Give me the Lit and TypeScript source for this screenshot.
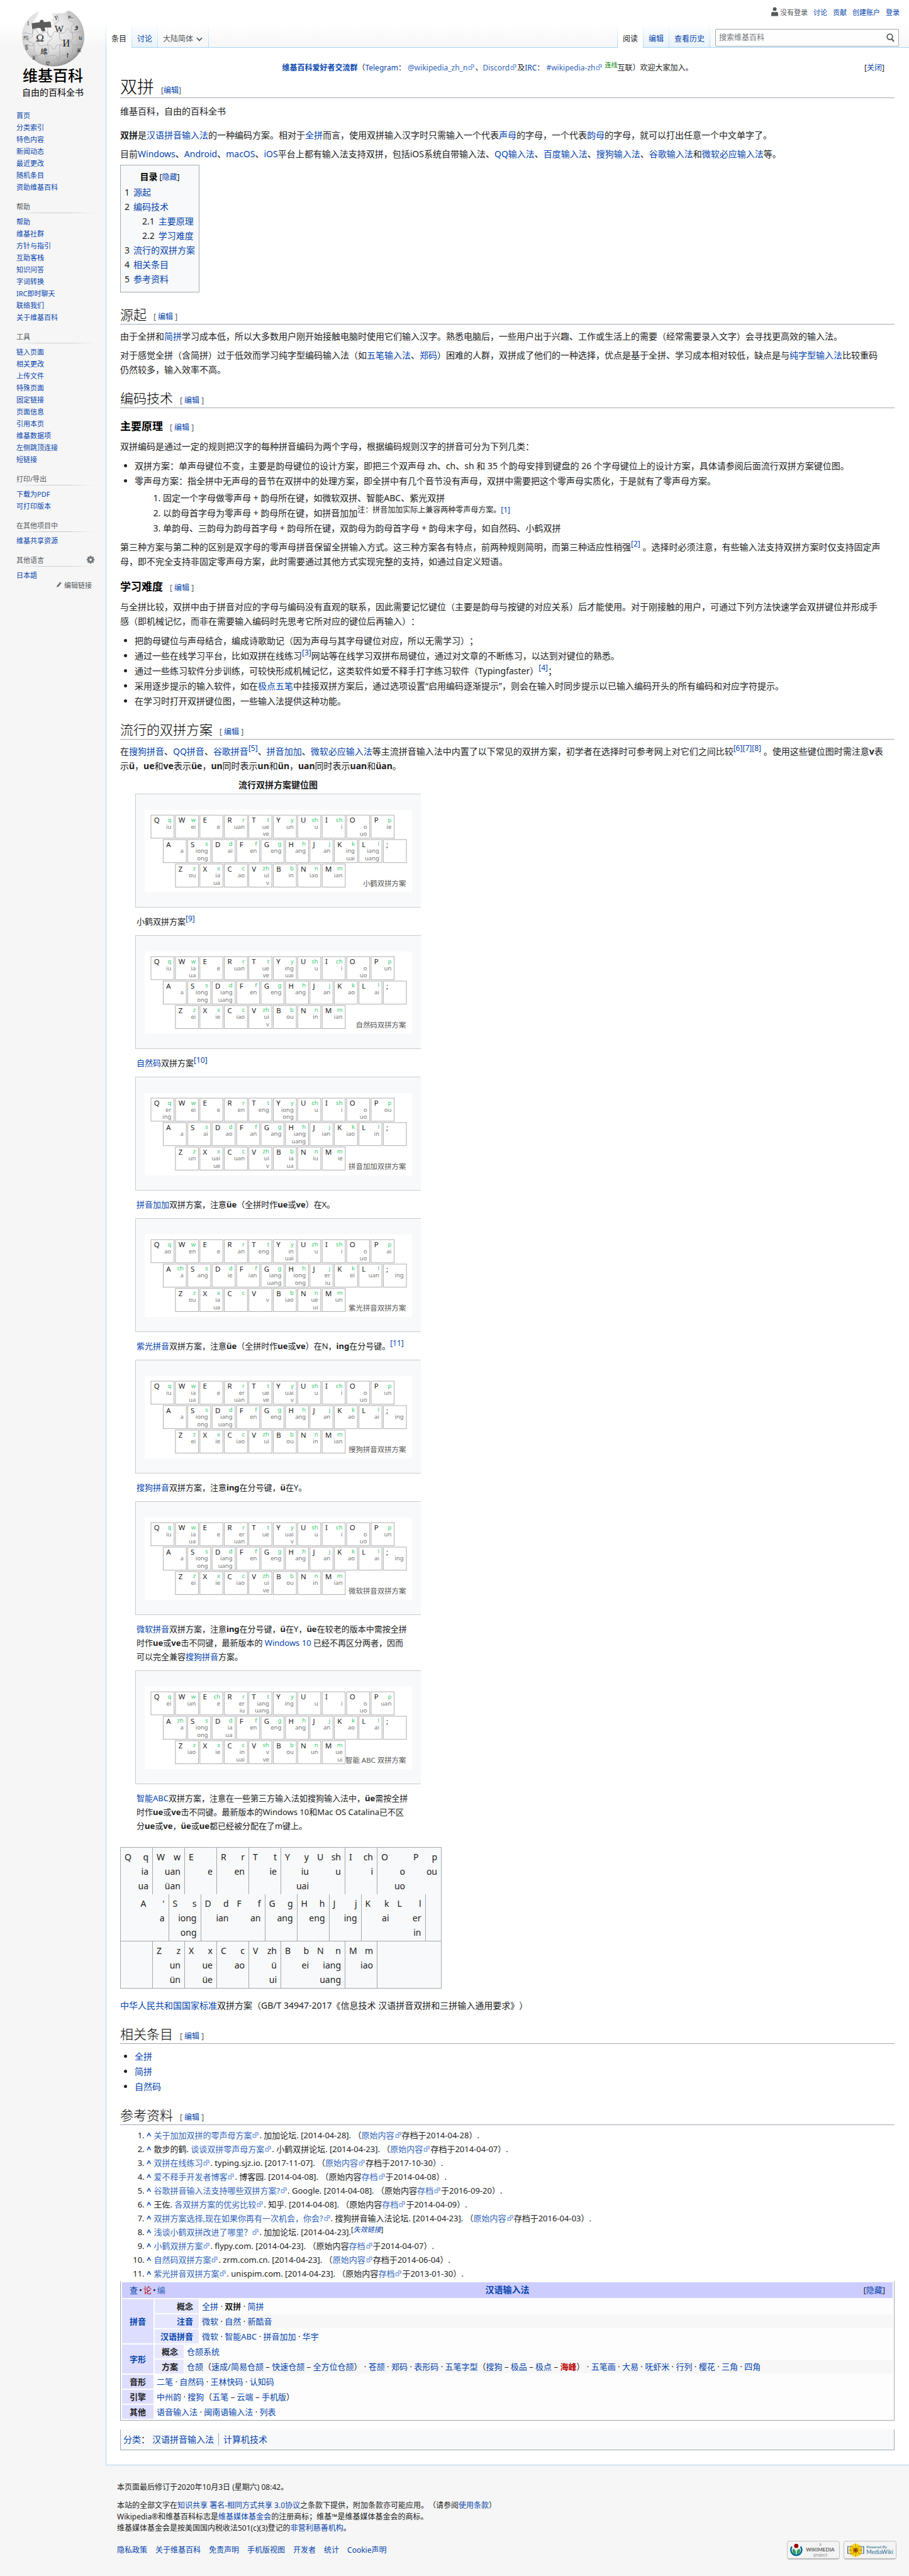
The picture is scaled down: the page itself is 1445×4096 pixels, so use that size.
import { LitElement, html, svg, css, nothing } from "lit";
import { customElement, property } from "lit/decorators.js";

const link = (t: unknown, cls = "") => html`<a class=${cls} href="#">${t}</a>`;

const extIcon = html`<svg class="ext-icon" viewBox="0 0 12 12" aria-hidden="true"><path d="M1.5 4.5h5.5v6h-5.500z" fill="#fff" stroke="#36c" /><path d="M5.800 1h5.200v5.200L9.200 4.600 6.600 7.200 4.900 5.500 7.500 2.900z" fill="#fff" stroke="#36c" stroke-linejoin="round" /></svg>`;

const ext = (t: unknown) => html`<a class="ext" href="#">${t}${extIcon}</a>`;

const cite = (n: string) => html`<sup><a href="#">[${n}]</a></sup>`;

/* A key is "Letter.initial.final1.final2"; rows are separated by a bar. */
interface Scheme {
  name: string;
  keys: string;
  caption: unknown;
}

const schemes: Scheme[] = [
  {
    name: "小鹤双拼方案",
    keys: "Q.q.iu W.w.ei E..e R.r.uan T.t.ue.ve Y.y.un U.sh.u I.ch.i O..o.uo P.p.ie|A..a S.s.iong.ong D.d.ai F.f.en G.g.eng H.h.ang J.j.an K.k.ing.uai L.l.iang.uang ;|Z.z.ou X.x.ia.ua C.c.ao V.zh.ui.v B.b.in N.n.iao M.m.ian",
    caption: html`小鹤双拼方案${cite("9")}`,
  },
  {
    name: "自然码双拼方案",
    keys: "Q.q.iu W.w.ia.ua E..e R.r.uan T.t.ue.ve Y.y.ing.uai U.sh.u I.ch.i O..o.uo P.p.un|A..a S.s.iong.ong D.d.iang.uang F.f.en G.g.eng H.h.ang J.j.an K.k.ao L.l.ai ;|Z.z.ei X.x.ie C.c.iao V.zh.ui.v B.b.ou N.n.in M.m.ian",
    caption: html`${link("自然码")}双拼方案${cite("10")}`,
  },
  {
    name: "拼音加加双拼方案",
    keys: "Q.q.er.ing W.w.ei E..e R.r.en T.t.eng Y.y.iong.ong U.ch.u I.sh.i O..o.uo P.p.ou|A..a S.s.ai D.d.ao F.f.an G.g.ang H.h.iang.uang J.j.ian K.k.iao L.l.in ;|Z.z.un X.x.uai.ue C.c.uan V.zh.ui.v B.b.ia.ua N.n.iu M.m.ie",
    caption: html`${link("拼音加加")}双拼方案，注意<b>üe</b>（全拼时作<b>ue</b>或<b>ve</b>）在X。`,
  },
  {
    name: "紫光拼音双拼方案",
    keys: "Q.q.ao W.w.en E..e R.r.an T.t.eng Y.y.in.uai U.zh.u I.sh.i O..o.uo P.p.ai|A.ch.a S.s.ang D.d.ie F.f.ian G.g.iang.uang H.h.iong.ong J.j.er.iu K.k.ei L.l.uan ;..ing|Z.z.ou X.x.ia.ua C.c V..v B.b.iao N.n.ue.ui M.m.un",
    caption: html`${link("紫光拼音")}双拼方案，注意<b>üe</b>（全拼时作<b>ue</b>或<b>ve</b>）在N，<b>ing</b>在分号键。${cite("11")}`,
  },
  {
    name: "搜狗拼音双拼方案",
    keys: "Q.q.iu W.w.ia.ua E..e R.r.er.uan T.t.ue.ve Y.y.uai.v U.sh.u I.ch.i O..o.uo P.p.un|A..a S.s.iong.ong D.d.iang.uang F.f.en G.g.eng H.h.ang J.j.an K.k.ao L.l.ai ;..ing|Z.z.ei X.x.ie C.c.iao V.zh.ui B.b.ou N.n.in M.m.ian",
    caption: html`${link("搜狗拼音")}双拼方案，注意<b>ing</b>在分号键，<b>ü</b>在Y。`,
  },
  {
    name: "微软拼音双拼方案",
    keys: "Q.q.iu W.w.ia.ua E..e R.r.er.uan T.t.ue Y.y.uai.v U.sh.u I.ch.i O..o.uo P.p.un|A..a S.s.iong.ong D.d.iang.uang F.f.en G.g.eng H.h.ang J.j.an K.k.ao L.l.ai ;..ing|Z.z.ei X.x.ie C.c.iao V.zh.ui.ve B.b.ou N.n.in M.m.ian",
    caption: html`${link("微软拼音")}双拼方案，注意<b>ing</b>在分号键，<b>ü</b>在Y，<b>üe</b>在较老的版本中需按全拼时作<b>ue</b>或<b>ve</b>击不同键，最新版本的 ${link("Windows 10")} 已经不再区分两者，因而<span class="keep">可以完全</span>兼容${link("搜狗拼音")}方案。`,
  },
  {
    name: "智能 ABC 双拼方案",
    keys: "Q.q.ei W.w.ian E.ch.e R.r.er.iu T.t.iang.uang Y.y.ing U..u I..i O..o.uo P.p.uan|A.zh.a S.s.iong.ong D.d.ia.ua F.f.en G.g.eng H.h.ang J.j.an K.k.ao L.l.ai ;|Z.z.iao X.x.ie C.c.in.uai V.sh.v.ve B.b.ou N.n.un M.m.ue.ui",
    caption: html`${link("智能ABC")}双拼方案，注意在一些第三方输入法如搜狗输入法中，<b>üe</b>需按全拼时作<b>ue</b>或<b>ve</b>击不同键。最新版本的Windows 10和Mac OS Catalina已不区<span class="keep">分<b>ue</b>或</span><b>ve</b>，<b>üe</b>或<b>ue</b>都已经被分配在了m键上。`,
  },
];

@customElement("keyboard-map")
class KeyboardMap extends LitElement {
  @property() keys = "";
  @property() name = "";

  static styles = css`
    :host {
      display: block;
    }
    .map {
      display: block;
      width: 100%;
      background: #fff;
      font-family: "Noto Sans", "Noto Sans CJK SC", sans-serif;
    }
    .key {
      fill: #fff;
      stroke: #aaa;
    }
    .letter {
      font-size: 12px;
      fill: #222;
    }
    .initial {
      font-size: 10px;
      fill: #3ccb70;
      text-anchor: end;
    }
    .final {
      font-size: 10px;
      fill: #777;
      text-anchor: end;
    }
    .name {
      font-size: 12px;
      fill: #555;
      text-anchor: end;
    }
  `;

  render() {
    return html`<svg class="map" viewBox="0 0 446 137" role="img" aria-label=${this.name}>
      ${this.keys.split("|").map((row, r) =>
        row.split(" ").map((k, c) => {
          const [letter, initial, ...finals] = k.split(".");
          const x = 10.5 + r * 20.4 + c * 40.8;
          const y = 8.5 + r * 40.8;
          return svg`<rect class="key" x=${x} y=${y} width="38.500" height="38.500"></rect>
            <text class="letter" x=${x + 5} y=${y + 12.5}>${letter}</text>
            <text class="initial" x=${x + 34} y=${y + 11}>${initial ?? ""}</text>
            ${finals.map((f, i) => svg`<text class="final" x=${x + 34} y=${y + 22.5 + i * 12.5}>${f}</text>`)}`;
        }),
      )}
      <text class="name" x="436" y="127">${this.name}</text>
    </svg>`;
  }
}

@customElement("wiki-globe")
class WikiGlobe extends LitElement {
  static styles = css`
    :host {
      display: block;
    }
    .globe {
      display: block;
      width: 100%;
      font-family: "Liberation Serif", "Noto Sans CJK SC", serif;
    }
    .glyph {
      fill: #222;
      text-anchor: middle;
    }
  `;

  render() {
    return html`<svg class="globe" viewBox="0 0 104 93" aria-hidden="true">
      <defs>
        <radialGradient id="ball" cx="0.4" cy="0.35" r="0.7">
          <stop offset="0" stop-color="#fafafa" />
          <stop offset="0.550" stop-color="#dedede" />
          <stop offset="0.850" stop-color="#b4b4b4" />
          <stop offset="1" stop-color="#858585" />
        </radialGradient>
      </defs>
      <path d="M28 1C20 5 14 9 9 16 3 24 0 33 0 43 0 71 23 93 52 93s52-22 52-50c0-16-7-31-20-40-3-2-5-3-8-3l-3 3c-6 3-10 0-15 2-3 1-5-2-7 0-1 3 2 4 0 8-3 3-1 5 0 8l-3 4-8-1-7 3-8-2-9 4c-2-5 3-9 5-13 2-3 4-6 5-9z" fill="url(#ball)" />
      <path d="M16 21l7-1c3-1 6 0 7-2-1-3 6-4 6 0 1 2 6 0 9 0l3 1 1 9-8 0c-4 0-4 2-2 4 1 3-7 4-7 0 0-3-3-3-6-3l-9 2z" fill="#5c5c5c" />
      <g fill="none" stroke="#a3a3a3" stroke-width="0.800">
        <path d="M2 38c6-3 10 2 13 1 5-1 1-7 6-8 6 0 3 6 7 7 5 1 9-4 14-2 4 1 1 7 6 7 5 0 2-7 7-8 5 0 10 4 15 2 4-1 1-7 6-7 5 1 2 6 7 7 5 0 10-3 17-1" />
        <path d="M3 58c7-3 10 2 15 0 4-1 1-6 6-6 5 1 2 6 7 7 5 0 10-3 16-1 4 1 1 6 6 6 5-1 2-6 7-7 6 0 10 4 15 2 5-2 1-7 6-7 5 1 3 6 7 6l13-2" />
        <path d="M14 76c5-3 10 1 14-1 4-1 1-5 6-5 4 1 2 5 6 6 6 0 10-2 15-1 5 1 1 6 6 6 4-1 2-6 7-6 6-1 13 2 19-1" />
        <path d="M20 29c-4 4-1 9-3 14-2 4-8 2-7 7 1 4 7 1 9 6 3 6-1 11 3 16 4 4 2 8 7 14" />
        <path d="M42 28c3 4-1 8 1 13 2 4 6 1 7 5 0 4-6 3-7 8-1 6 3 10 1 16-1 5-6 2-6 6 1 5 6 3 7 15" />
        <path d="M60 5c-3 4 2 7 1 12-1 4-6 2-6 6 1 4 7 2 8 7 1 6-2 10 0 16 1 5 7 2 7 7-1 4-6 2-7 7-1 6 2 10-1 16-2 7-1 10-4 15" />
        <path d="M78 2c2 4-3 8 0 13 3 4 7 1 9 5 1 4-5 4-5 9 0 7 4 10 3 17 0 4-6 3-5 8 1 4 6 2 6 7-1 8-4 10-6 22" />
      </g>
      <g class="glyph">
        <text class="glyph" x="30" y="51" font-size="18">Ω</text>
        <text class="glyph" x="62" y="36" font-size="16">W</text>
        <text class="glyph" x="74" y="60" font-size="17">И</text>
        <text class="glyph" x="37" y="73" font-size="12">維</text>
        <text class="glyph" x="76" y="79" font-size="14" font-weight="bold">ז</text>
        <text class="glyph" x="57" y="16" font-size="9">Ϋ</text>
        <text class="glyph" x="81" y="13" font-size="10">உ</text>
        <text class="glyph" x="91" y="29" font-size="13">و</text>
        <text class="glyph" x="10" y="24" font-size="9">1</text>
        <text class="glyph" x="6" y="46" font-size="10">ஜ</text>
        <text class="glyph" x="98" y="48" font-size="9">ม</text>
        <text class="glyph" x="8" y="65" font-size="9">წ</text>
        <text class="glyph" x="43" y="89" font-size="8">ღ</text>
        <text class="glyph" x="95" y="69" font-size="8">Ж</text>
        <text class="glyph" x="20" y="82" font-size="8">R</text>
      </g>
    </svg>`;
  }
}

interface StdKey {
  span: number;
  letter?: string;
  initial?: string;
  finals?: string[];
  open?: boolean;
}

/* "/" after a key leaves out the line on its right; "_n" is a blank of n half columns. */
const parseStd = (row: string): StdKey[] =>
  row.split(" ").map((k) => {
    const open = k.endsWith("/");
    const body = open ? k.slice(0, -1) : k;
    if (body.startsWith("_")) return { span: Number(body.slice(1)), open };
    const [letter, initial, ...finals] = body.split(".");
    return { span: 2, letter, initial, finals, open };
  });

const stdRows = [
  "Q.q.ia.ua W.w.uan.üan E..e R.r.en T.t.ie Y.y.iu.uai/ U.sh.u I.ch.i O..o.uo/ P.p.ou",
  "_1/ A.'.a S.s.iong.ong D.d.ian/ F.f.an G.g.ang H.h.eng J.j.ing K.k.ai/ L.l.er.in _1",
  "_2 Z.z.un.ün X.x.ue.üe C.c.ao V.zh.ü.ui B.b.ei/ N.n.iang.uang M.m.iao _4",
];

const sections: { title?: string; items: string[] }[] = [
  { items: ["首页", "分类索引", "特色内容", "新闻动态", "最近更改", "随机条目", "资助维基百科"] },
  { title: "帮助", items: ["帮助", "维基社群", "方针与指引", "互助客栈", "知识问答", "字词转换", "IRC即时聊天", "联络我们", "关于维基百科"] },
  { title: "工具", items: ["链入页面", "相关更改", "上传文件", "特殊页面", "固定链接", "页面信息", "引用本页", "维基数据项", "左侧跳顶连接", "短链接"] },
  { title: "打印/导出", items: ["下载为PDF", "可打印版本"] },
  { title: "在其他项目中", items: ["维基共享资源"] },
];

const origin = (date: string) => html` （${ext("原始内容")}存档于${date}）.`;
const archived = (date: string) => html` （原始内容${ext("存档")}于${date}）.`;

const references: unknown[] = [
  html`${ext("关于加加双拼的零声母方案")}. 加加论坛. [2014-04-28]. ${origin("2014-04-28")}`,
  html`散步的鹤. ${ext("谈谈双拼零声母方案")}. 小鹤双拼论坛. [2014-04-23]. ${origin("2014-04-07")}`,
  html`${ext("双拼在线练习")}. typing.sjz.io. [2017-11-07]. ${origin("2017-10-30")}`,
  html`${ext("爱不释手开发者博客")}. 博客园. [2014-04-08]. ${archived("2014-04-08")}`,
  html`${ext("谷歌拼音输入法支持哪些双拼方案?")}. Google. [2014-04-08]. ${archived("2016-09-20")}`,
  html`王佐. ${ext("各双拼方案的优劣比较")}. 知乎. [2014-04-08]. ${archived("2014-04-09")}`,
  html`${ext("双拼方案选择,现在如果你再有一次机会，你会?")}. 搜狗拼音输入法论坛. [2014-04-23]. ${origin("2016-04-03")}`,
  html`${ext("浅谈小鹤双拼改进了哪里？")}. 加加论坛. [2014-04-23].<sup class="dead">[<a href="#"><i>失效链接</i></a>]</sup>`,
  html`${ext("小鹤双拼方案")}. flypy.com. [2014-04-23]. ${archived("2014-04-07")}`,
  html`${ext("自然码双拼方案")}. zrm.com.cn. [2014-04-23]. ${origin("2014-06-04")}`,
  html`${ext("紫光拼音双拼方案")}. unispim.com. [2014-04-23]. ${archived("2013-01-30")}`,
];

const joined = (items: unknown[], sep: string) => items.map((t, i) => html`${i ? sep : nothing}${typeof t === "string" ? link(t) : t}`);
const dots = (...items: unknown[]) => joined(items, " · ");
const dashes = (...items: unknown[]) => joined(items, " – ");

@customElement("app-root")
class AppRoot extends LitElement {
  static styles = css`
    :host {
      display: block;
      font-family: "Noto Sans", "Noto Sans CJK SC", sans-serif;
      font-size: 14px;
      line-height: 23px;
      color: #202122;
      text-spacing-trim: space-all;
    }
    * {
      box-sizing: border-box;
    }
    a {
      color: #0645ad;
      text-decoration: none;
    }
    a.ext {
      color: #36b;
    }
    a.red {
      color: #ba0000;
    }
    button {
      font: inherit;
      color: #0645ad;
      background: none;
      border: 0;
      padding: 0;
    }
    ul,
    ol,
    p,
    h1,
    h2,
    h3,
    figure {
      margin: 0;
      padding: 0;
    }
    sup {
      font-size: 12px;
      line-height: 0;
    }
    .keep {
      white-space: nowrap;
    }
    .ext-icon {
      width: 10px;
      height: 10px;
      margin: 0 1px;
    }
    .page {
      display: grid;
      grid-template-columns: 168px minmax(0, 1fr);
      background: linear-gradient(#fff 38px, #f6f6f6 76px) no-repeat;
      background-size: 100% 76px;
      background-color: #f6f6f6;
    }

    /* sidebar */
    .side {
      font-size: 11px;
      line-height: 19px;
      padding-top: 17px;
    }
    .logo {
      display: flex;
      flex-direction: column;
      align-items: center;
      color: #000;
    }
    .logo wiki-globe {
      width: 99px;
    }
    .wordmark {
      font-size: 24px;
      line-height: 28px;
      font-weight: 500;
    }
    .slogan {
      font-size: 14px;
      line-height: 20px;
      margin-top: 3px;
    }
    .portal {
      padding: 0 17px 0 26px;
      margin-top: 12px;
    }
    .portal.first {
      margin-top: 17px;
    }
    .portal-title {
      display: flex;
      justify-content: space-between;
      align-items: center;
      font-size: 11px;
      font-weight: normal;
      line-height: 19px;
      color: #54595d;
      border-bottom: 1px solid;
      border-image: linear-gradient(to right, #f6f6f6, #c8ccd1 33%, #c8ccd1 66%, #f6f6f6) 1;
      margin: 0 0 4px;
    }
    .portal ul,
    .tabs,
    .personal,
    .gallery,
    .foot-links,
    .toc ul {
      list-style: none;
    }
    .gear {
      width: 14px;
      height: 14px;
    }
    .edit-langs {
      text-align: right;
      line-height: 14px;
      padding-right: 5px;
    }
    .edit-langs a {
      color: #54595d;
    }
    .pencil {
      width: 10px;
      height: 11px;
    }

    /* header */
    .personal {
      display: flex;
      justify-content: flex-end;
      align-items: center;
      gap: 9px;
      height: 38px;
      padding-right: 15px;
      font-size: 11px;
      line-height: 19px;
    }
    .anon {
      display: flex;
      align-items: center;
      gap: 3px;
      color: #54595d;
    }
    .user {
      width: 11px;
      height: 16px;
    }
    .nav {
      display: flex;
      align-items: stretch;
      height: 38px;
      font-size: 12px;
      line-height: 18px;
      border-bottom: 1px solid #a7d7f9;
      padding-right: 16px;
    }
    .tabs {
      display: flex;
    }
    .tabs.right {
      margin-left: auto;
      border-left: 1px solid;
      border-image: linear-gradient(#fff, #a7d7f9) 1;
    }
    .tabs.left {
      border-left: 1px solid;
      border-image: linear-gradient(#fff, #a7d7f9) 1;
    }
    .tab {
      padding: 15px 8px 0;
      border-right: 1px solid;
      border-image: linear-gradient(#fff, #a7d7f9) 1;
      background: linear-gradient(#fff, #e8f2f8);
    }
    .tab.on {
      background: linear-gradient(#fff, #fff);
      margin-bottom: -1px;
    }
    .tab.on a {
      color: #202122;
    }
    .tab.variant {
      background: none;
      width: 81px;
    }
    .tab.variant button {
      color: #54595d;
      display: flex;
      align-items: center;
      gap: 5px;
      white-space: nowrap;
    }
    .chev {
      width: 10px;
      height: 7px;
    }
    .search {
      display: flex;
      align-items: center;
      width: 292px;
      height: 28px;
      margin: 8px 0 0 8px;
      padding: 0 6px 0 5px;
      background: rgba(255, 255, 255, 0.7);
      border: 1px solid #a2a9b1;
      border-radius: 2px;
    }
    .search input {
      flex: 1;
      min-width: 0;
      border: 0;
      padding: 0;
      outline: 0;
      background: none;
      font: inherit;
    }
    .search input::placeholder {
      color: #72777d;
      opacity: 1;
    }
    .search button {
      display: flex;
    }
    .glass {
      width: 13px;
      height: 14px;
    }

    /* article */
    .content {
      background: #fff;
      border-left: 1px solid #a7d7f9;
      border-bottom: 1px solid #a7d7f9;
      padding: 20px 23px 23px 22px;
    }
    .notice {
      display: flex;
      font-size: 12px;
    }
    .notice-text {
      flex: 1;
      text-align: center;
    }
    .notice-close {
      width: 63px;
      padding-right: 16px;
      text-align: right;
    }
    .notice sup {
      color: #008000;
      font-size: 10px;
    }
    h1,
    h2 {
      font-weight: 300;
      color: #000;
      border-bottom: 1px solid #a2a9b1;
    }
    h1 {
      font-size: 27px;
      line-height: 34px;
      margin-top: 2px;
    }
    h2 {
      font-size: 21px;
      line-height: 30px;
      margin-top: 19px;
    }
    h3 {
      font-size: 17px;
      line-height: 26px;
      color: #000;
      margin-top: 16px;
    }
    .edit {
      font-size: 12px;
      line-height: 1;
      font-weight: normal;
      color: #54595d;
      margin-left: 11px;
    }
    .body p {
      margin-top: 7px;
      padding-right: 16px;
    }
    .body p.sub {
      margin-top: 9px;
    }
    .body p.lead {
      margin-top: 15px;
    }
    .toc {
      width: fit-content;
      margin: 6px 0 20px;
      padding: 7px 6px 9px 6px;
      border: 1px solid #a2a9b1;
      background: #f8f9fa;
    }
    .toc-title {
      font-size: 12px;
      text-align: center;
      color: #000;
      margin-bottom: 1px;
    }
    .toc-title b {
      font-size: 14px;
      line-height: 1;
    }
    .toc .num {
      display: inline-block;
      margin-right: 6px;
    }
    .toc ul ul {
      padding-left: 28px;
    }
    .list {
      padding-left: 23px;
      margin-top: 8px;
    }
    .list > li {
      margin-bottom: 1px;
    }
    .list ol {
      padding-left: 45px;
      margin-top: 4px;
    }
    .list ol > li {
      margin-bottom: 1px;
    }

    /* keyboard gallery */
    .gallery {
      margin: 7px 0 0 24px;
      width: 454px;
    }
    .gallery-title {
      text-align: center;
      font-weight: bold;
      margin-bottom: 3px;
    }
    .thumb {
      height: 181px;
      padding: 25px 14px;
      background: #f8f9fa;
      border: 1px solid #c8ccd1;
      border-right: 0;
    }
    .gallery figcaption {
      font-size: 13px;
      line-height: 22px;
      padding: 11px 10px 11px 2px;
    }

    /* national standard keyboard */
    .std {
      width: 511px;
      margin-top: 12px;
      table-layout: fixed;
      border-collapse: separate;
      border-spacing: 0;
      background: #f8f9fa;
      border: 1px solid #a2a9b1;
      border-right: 0;
    }
    .std td {
      height: 74px;
      padding: 3px 6px 2px;
      vertical-align: top;
      border-right: 1px solid #a2a9b1;
    }
    .std td.open {
      border-right-color: transparent;
    }
    .std tr.last td {
      border-top: 1px solid #a2a9b1;
    }
    .std-key {
      display: flex;
      justify-content: space-between;
      text-align: right;
    }
    .std-key .fin {
      margin-left: -14px;
    }
    .body p.std-note {
      margin-top: 15px;
    }

    /* references */
    .refs {
      font-size: 13px;
      line-height: 22px;
      padding-left: 42px;
      margin-top: 5px;
    }
    .refs .up {
      font-weight: bold;
      margin-right: 4px;
    }
    .refs .dead {
      font-size: 11px;
    }

    /* navbox */
    .navbox {
      width: 100%;
      margin-top: 1px;
      border: 1px solid #a2a9b1;
      border-top: 0;
      border-spacing: 2px;
      background: #fdfdfd;
      font-size: 13px;
      line-height: 20px;
    }
    .navbox td,
    .navbox th {
      padding: 1px 5px;
      text-align: left;
      font-weight: normal;
    }
    .navbox .bar {
      background: #ccf;
      padding: 0 12px;
    }
    .bar-row {
      display: grid;
      grid-template-columns: 1fr auto 1fr;
      line-height: 25px;
    }
    .bar-row strong {
      font-size: 14px;
      line-height: 24px;
    }
    .bar-links {
      display: flex;
      gap: 2px;
    }
    .bar-row .hide {
      text-align: right;
    }
    .navbox .group {
      width: 50px;
      background: #ddf;
      font-weight: bold;
      text-align: right;
      padding: 1px 12px;
      white-space: nowrap;
    }
    .navbox .holder {
      padding: 0;
    }
    .nested {
      width: 100%;
      border-spacing: 0;
    }
    .nested .subgroup {
      width: 46px;
      background: #e6e6ff;
      background-clip: padding-box;
      font-weight: bold;
      text-align: right;
      padding: 1px 9px;
      white-space: nowrap;
    }
    .nested .subgroup.wide {
      width: 70px;
    }
    .nested .alt td {
      background: #f7f7f7;
      background-clip: padding-box;
    }
    .nested tr + tr > * {
      border-top: 2px solid transparent;
    }
    .nested td {
      border-left: 2px solid transparent;
      padding-left: 3px;
    }
    .navbox .plain {
      padding-left: 3px;
    }
    .cats {
      display: flex;
      align-items: center;
      margin-top: 14px;
      padding: 6px 4px 6px;
      border: 1px solid #a2a9b1;
      border-top: 0;
      background: #f8f9fa;
      line-height: 20px;
    }
    .cats ul {
      display: flex;
      list-style: none;
    }
    .cats li {
      padding: 0 7px;
    }
    .cats li + li {
      border-left: 1px solid #a2a9b1;
    }
    .cats .label {
      margin-right: -3px;
    }

    /* footer */
    .foot {
      grid-column: 2;
      padding: 26px 20px 28px 18px;
      font-size: 12px;
      line-height: 18px;
    }
    .foot p + p {
      margin-top: 11px;
    }
    .foot-row {
      display: flex;
      justify-content: space-between;
      align-items: center;
      margin-top: 11px;
    }
    .foot-links {
      display: flex;
      gap: 13px;
    }
    .badges {
      display: flex;
      gap: 6px;
    }
    .badge {
      display: block;
      width: 84px;
      height: 30px;
    }
    .badge svg {
      display: block;
      width: 100%;
      height: 100%;
      font-family: Lato, sans-serif;
    }
  `;

  private edit(spaced = true) {
    return spaced ? html`<span class="edit">[ ${link("编辑")} ]</span>` : html`<span class="edit">[${link("编辑")}]</span>`;
  }

  private sidebar() {
    return html`<nav class="side" aria-label="导航">
      <a class="logo" href="#"><wiki-globe></wiki-globe><span class="wordmark">维基百科</span><span class="slogan">自由的百科全书</span></a>
      ${sections.map(
        (s) => html`<div class="portal ${s.title ? "" : "first"}">
          ${s.title ? html`<h3 class="portal-title">${s.title}</h3>` : nothing}
          <ul>${s.items.map((i) => html`<li>${link(i)}</li>`)}</ul>
        </div>`,
      )}
      <div class="portal">
        <h3 class="portal-title">其他语言<svg class="gear" viewBox="0 0 20 20" aria-hidden="true"><g fill="#72777d"><path fill-rule="evenodd" d="M10 3.500a6.500 6.500 0 1 0 0 13 6.500 6.500 0 0 0 0-13zm0 3.700a2.800 2.800 0 1 1 0 5.600 2.800 2.800 0 0 1 0-5.600z" />${[0, 45, 90, 135].map((a) => svg`<path transform="rotate(${a} 10 10)" d="M8.300 1h3.400l.6 4H7.700zM8.300 19h3.400l.6-4H7.700z"></path>`)}</g></svg></h3>
        <ul><li>${link("日本語")}</li></ul>
        <div class="edit-langs"><a href="#"><svg class="pencil" viewBox="0 0 10 11" aria-hidden="true"><path d="M1 10l.6-3L6.800 1.200 8.900 2.900 3.800 8.900z" fill="#72777d" /></svg> 编辑链接</a></div>
      </div>
    </nav>`;
  }

  private header() {
    return html`<header>
      <ul class="personal">
        <li class="anon"><svg class="user" viewBox="0 0 11 16" aria-hidden="true"><circle cx="5.500" cy="3.500" r="3" fill="#54595d" /><path d="M0 14.500V11c0-2 1-3.300 3-3.300 1.600 1 3.400 1 5 0 2 0 3 1.300 3 3.300v3.500z" fill="#54595d" /></svg>没有登录</li>
        ${["讨论", "贡献", "创建账户", "登录"].map((t) => html`<li>${link(t)}</li>`)}
      </ul>
      <div class="nav">
        <ul class="tabs left">
          <li class="tab on">${link("条目")}</li>
          <li class="tab">${link("讨论")}</li>
          <li class="tab variant"><button type="button">大陆简体<svg class="chev" viewBox="0 0 10 7" aria-hidden="true"><path d="M1 1l4 4.500L9 1" fill="none" stroke="#54595d" stroke-width="1.800" /></svg></button></li>
        </ul>
        <ul class="tabs right">
          <li class="tab on">${link("阅读")}</li>
          <li class="tab">${link("编辑")}</li>
          <li class="tab">${link("查看历史")}</li>
        </ul>
        <form class="search" role="search" @submit=${(e: Event) => e.preventDefault()}>
          <input type="search" aria-label="搜索维基百科" placeholder="搜索维基百科" />
          <button type="submit" aria-label="搜索"><svg class="glass" viewBox="0 0 13 14" aria-hidden="true"><circle cx="5.500" cy="5.500" r="4.300" fill="none" stroke="#54595d" stroke-width="1.700" /><path d="M8.500 9l3.500 4" stroke="#54595d" stroke-width="2" /></svg></button>
        </form>
      </div>
    </header>`;
  }

  private toc() {
    const row = (n: string, t: string, sub: unknown = nothing) => html`<li><span class="num">${n}</span>${link(t)}${sub}</li>`;
    return html`<div class="toc">
      <div class="toc-title"><b>目录</b> [<button type="button">隐藏</button>]</div>
      <ul>
        ${row("1", "源起")}
        ${row("2", "编码技术", html`<ul>${row("2.1", "主要原理")}${row("2.2", "学习难度")}</ul>`)}
        ${row("3", "流行的双拼方案")}${row("4", "相关条目")}${row("5", "参考资料")}
      </ul>
    </div>`;
  }

  private standardTable() {
    return html`<table class="std">
      <colgroup>${Array.from({ length: 20 }, () => html`<col />`)}</colgroup>
      <tbody>
        ${stdRows.map(
          (row, r) => html`<tr class=${r === 2 ? "last" : ""}>
            ${parseStd(row).map(
              (k) => html`<td colspan=${k.span} class=${k.open ? "open" : ""}>${k.letter
                ? html`<div class="std-key"><span>${k.letter}</span><div class="fin"><div>${k.initial || "\u00a0"}</div>${k.finals!.map((f) => html`<div>${f}</div>`)}</div></div>`
                : nothing}</td>`,
            )}
          </tr>`,
        )}
      </tbody>
    </table>`;
  }

  private navbox() {
    const sub = (label: unknown, list: unknown, wide = false, alt = false) =>
      html`<tr class=${alt ? "alt" : ""}><th class="subgroup ${wide ? "wide" : ""}">${label}</th><td>${list}</td></tr>`;
    const group = (label: unknown, list: unknown) => html`<tr><th class="group">${label}</th><td class="plain">${list}</td></tr>`;
    return html`<table class="navbox">
      <tbody>
        <tr>
          <th class="bar" colspan="2">
            <div class="bar-row"><span class="bar-links">${link("查")}<span>•</span>${link("论", "red")}<span>•</span><a class="ext" href="#">编</a></span><strong>${link("汉语输入法")}</strong><span class="hide">[<button type="button">隐藏</button>]</span></div>
          </th>
        </tr>
        <tr>
          <th class="group">${link("拼音")}</th>
          <td class="holder"><table class="nested"><tbody>
            ${sub("概念", dots("全拼", html`<b>双拼</b>`, "简拼"), true)}
            ${sub(link("注音"), dots("微软", "自然", "新酷音"), true, true)}
            ${sub(link("汉语拼音"), dots("微软", "智能ABC", "拼音加加", "华宇"), true)}
          </tbody></table></td>
        </tr>
        <tr>
          <th class="group">${link("字形")}</th>
          <td class="holder"><table class="nested"><tbody>
            ${sub("概念", link("仓颉系统"))}
            ${sub("方案", dots(html`${link("仓颉")}（${link("速成/简易仓颉")} – ${dashes("快速仓颉", "全方位仓颉")}）`, "苍颉", "郑码", "表形码", html`${link("五笔字型")}（${dashes("搜狗", "极品", "极点")} – ${link(html`<b>海峰</b>`, "red")}）`, "五笔画", "大易", "呒虾米", "行列", "樱花", "三角", "四角"), false, true)}
          </tbody></table></td>
        </tr>
        ${group("音形", dots("二笔", "自然码", "王林快码", "认知码"))}
        ${group("引擎", dots("中州韵", html`${link("搜狗")}（${dashes("五笔", "云端", "手机版")}）`))}
        ${group("其他", dots("语音输入法", "闽南语输入法", "列表"))}
      </tbody>
    </table>`;
  }

  private article() {
    return html`<main class="content">
      <div class="notice">
        <div class="notice-text"><b>${link("维基百科爱好者交流群")}</b>（${link("Telegram")}： ${ext("@wikipedia_zh_n")}、${ext("Discord")}及${link("IRC")}： ${ext("#wikipedia-zh")} <sup>连线</sup>互联）欢迎大家加入。</div>
        <div class="notice-close">[${link("关闭")}]</div>
      </div>
      <h1>双拼${this.edit(false)}</h1>
      <div class="body">
        <p class="sub">维基百科，自由的百科全书</p>
        <p class="lead"><b>双拼</b>是${link("汉语拼音输入法")}的一种编码方案。相对于${link("全拼")}而言，使用双拼输入汉字时只需输入一个代表${link("声母")}的字母，一个代表${link("韵母")}的字母，就可以打出任意一个中文单字了。</p>
        <p>目前${link("Windows")}、${link("Android")}、${link("macOS")}、${link("iOS")}平台上都有输入法支持双拼，包括iOS系统自带输入法、${link("QQ输入法")}、${link("百度输入法")}、${link("搜狗输入法")}、${link("谷歌输入法")}和${link("微软必应输入法")}等。</p>
        ${this.toc()}
        <h2>源起${this.edit()}</h2>
        <p>由于全拼和${link("简拼")}学习成本低，所以大多数用户刚开始接触电脑时使用它们输入汉字。熟悉电脑后，一些用户出于兴趣、工作或生活上的需要（经常需要录入文字）会寻找更高效的输入法。</p>
        <p>对于感觉全拼（含简拼）过于低效而学习纯字型编码输入法（如${link("五笔输入法")}、${link("郑码")}）困难的人群，双拼成了他们的一种选择，优点是基于全拼、学习成本相对较低，缺点是与${link("纯字型输入法")}比较重码仍然较多，输入效率不高。</p>
        <h2>编码技术${this.edit()}</h2>
        <h3>主要原理${this.edit()}</h3>
        <p>双拼编码是通过一定的规则把汉字的每种拼音编码为两个字母，根据编码规则汉字的拼音可分为下列几类：</p>
        <ul class="list">
          <li>双拼方案：单声母键位不变，主要是韵母键位的设计方案，即把三个双声母 zh、ch、sh 和 35 个韵母安排到键盘的 26 个字母键位上的设计方案，具体请参阅后面流行双拼方案键位图。</li>
          <li>零声母方案：指全拼中无声母的音节在双拼中的处理方案，即全拼中有几个音节没有声母，双拼中需要把这个零声母实质化，于是就有了零声母方案。
            <ol>
              <li>固定一个字母做零声母 + 韵母所在键，如微软双拼、智能ABC、紫光双拼</li>
              <li>以韵母首字母为零声母 + 韵母所在键，如拼音加加<sup>注：拼音加加实际上兼容两种零声母方案。${link("[1]")}</sup></li>
              <li>单韵母、三韵母为韵母首字母 + 韵母所在键，双韵母为韵母首字母 + 韵母末字母，如自然码、小鹤双拼</li>
            </ol>
          </li>
        </ul>
        <p>第三种方案与第二种的区别是双字母的零声母拼音保留全拼输入方式。这三种方案各有特点，前两种规则简明，而第三种适应性稍强${cite("2")} 。选择时必须注意，有些输入法支持双拼方案时仅支持固定声母，即不完全支持非固定零声母方案，此时需要通过其他方式实现完整的支持，如通过自定义短语。</p>
        <h3>学习难度${this.edit()}</h3>
        <p>与全拼比较，双拼中由于拼音对应的字母与编码没有直观的联系，因此需要记忆键位（主要是韵母与按键的对应关系）后才能使用。对于刚接触的用户，可通过下列方法快速学会双拼键位并形成手感（即机械记忆，而非在需要输入编码时先思考它所对应的键位后再输入）：</p>
        <ul class="list">
          <li>把韵母键位与声母结合，编成诗歌助记（因为声母与其字母键位对应，所以无需学习）；</li>
          <li>通过一些在线学习平台，比如双拼在线练习${cite("3")}网站等在线学习双拼布局键位，通过对文章的不断练习，以达到对键位的熟悉。</li>
          <li>通过一些练习软件分步训练，可较快形成机械记忆，这类软件如爱不释手打字练习软件（Typingfaster）${cite("4")}；</li>
          <li>采用逐步提示的输入软件，如在${link("极点五笔")}中挂接双拼方案后，通过选项设置“启用编码逐渐提示”，则会在输入时同步提示以已输入编码开头的所有编码和对应字符提示。</li>
          <li>在学习时打开双拼键位图，一些输入法提供这种功能。</li>
        </ul>
        <h2>流行的双拼方案${this.edit()}</h2>
        <p>在${link("搜狗拼音")}、${link("QQ拼音")}、${link("谷歌拼音")}${cite("5")}、${link("拼音加加")}、${link("微软必应输入法")}等主流拼音输入法中内置了以下常见的双拼方案，初学者在选择时可参考网上对它们之间比较${cite("6")}${cite("7")}${cite("8")} 。使用这些键位图时需注意<b>v</b>表示<b>ü</b>，<b>ue</b>和<b>ve</b>表示<b>üe</b>，<b>un</b>同时表示<b>un</b>和<b>ün</b>，<b>uan</b>同时表示<b>uan</b>和<b>üan</b>。</p>
        <ul class="gallery">
          <li class="gallery-title">流行双拼方案键位图</li>
          ${schemes.map(
            (s) => html`<li><figure><div class="thumb"><keyboard-map .keys=${s.keys} .name=${s.name}></keyboard-map></div><figcaption>${s.caption}</figcaption></figure></li>`,
          )}
        </ul>
        ${this.standardTable()}
        <p class="std-note">${link("中华人民共和国国家标准")}双拼方案（GB/T 34947-2017《信息技术 汉语拼音双拼和三拼输入通用要求》）</p>
        <h2>相关条目${this.edit()}</h2>
        <ul class="list">${["全拼", "简拼", "自然码"].map((t) => html`<li>${link(t)}</li>`)}</ul>
        <h2>参考资料${this.edit()}</h2>
        <ol class="refs">${references.map((r) => html`<li><a class="up" href="#">^</a>${r}</li>`)}</ol>
        ${this.navbox()}
        <div class="cats"><span class="label">${link("分类")}：</span><ul><li>${link("汉语拼音输入法")}</li><li>${link("计算机技术")}</li></ul></div>
      </div>
    </main>`;
  }

  private badgeFrame() {
    return svg`<rect x="0.500" y="0.500" width="87" height="30" rx="3" fill="#f4f4f4" stroke="#bbb"></rect><path d="M1 29.500h86" stroke="#aaa"></path>`;
  }

  private footer() {
    return html`<footer class="foot">
      <p>本页面最后修订于2020年10月3日 (星期六) 08:42。</p>
      <p>本站的全部文字在${link("知识共享 署名-相同方式共享 3.0协议")}之条款下提供，附加条款亦可能应用。（请参阅${link("使用条款")}）<br />Wikipedia®和维基百科标志是${link("维基媒体基金会")}的注册商标；维基™是维基媒体基金会的商标。<br />维基媒体基金会是按美国国内税收法501(c)(3)登记的${link("非营利慈善机构")}。</p>
      <div class="foot-row">
        <ul class="foot-links">${["隐私政策", "关于维基百科", "免责声明", "手机版视图", "开发者", "统计", "Cookie声明"].map((t) => html`<li>${link(t)}</li>`)}</ul>
        <div class="badges">
          <a class="badge" href="#" aria-label="Wikimedia"><svg viewBox="0 0 88 31">${this.badgeFrame()}
            <path d="M8.300 9.500a9 9 0 1 0 14.400 0" fill="none" stroke="#069" stroke-width="2.600" />
            <path d="M10.500 12.500c1 1.500 4.300 2 4.300 6v4.300a6.400 6.400 0 0 1-4.300-10.300zM20.500 12.500c-1 1.500-4.300 2-4.300 6v4.300a6.400 6.400 0 0 0 4.300-10.300z" fill="#396" />
            <circle cx="15.500" cy="8.300" r="3.600" fill="#900" />
            <text x="55.500" y="8" font-size="7" text-anchor="middle" fill="#888">a</text>
            <text x="55.500" y="17.500" font-size="8.500" font-weight="bold" text-anchor="middle" fill="#666">WIKIMEDIA</text>
            <text x="55.500" y="25.500" font-size="7.500" text-anchor="middle" fill="#888">project</text>
          </svg></a>
          <a class="badge" href="#" aria-label="MediaWiki"><svg viewBox="0 0 88 31">${this.badgeFrame()}
            <path d="M9.500 9.500H7v11.500h2.500M31 9.500h2.500v11.500H31M12.500 9.500H11v11.500h1.500M28 9.500h1.500v11.500H28" fill="none" stroke="#3a5a9a" stroke-width="1.300" />
            ${Array.from({ length: 16 }, (_, i) => svg`<ellipse cx="20" cy="8.500" rx="1.700" ry="4.500" fill=${i % 2 ? "#f5d400" : "#e0b000"} transform="rotate(${i * 22.5} 20 15.500)"></ellipse>`)}
            <circle cx="20" cy="15.500" r="4.200" fill="#b86a10" /><circle cx="20" cy="15.500" r="2" fill="#7a4208" />
            <text x="38" y="12" font-size="6.500" fill="#27708f">Powered By</text>
            <text x="38" y="21.500" font-size="9.500" fill="#27708f">MediaWiki</text>
          </svg></a>
        </div>
      </div>
    </footer>`;
  }

  render() {
    return html`<div class="page" lang="zh-CN">${this.sidebar()}<div>${this.header()}${this.article()}</div>${this.footer()}</div>`;
  }
}
